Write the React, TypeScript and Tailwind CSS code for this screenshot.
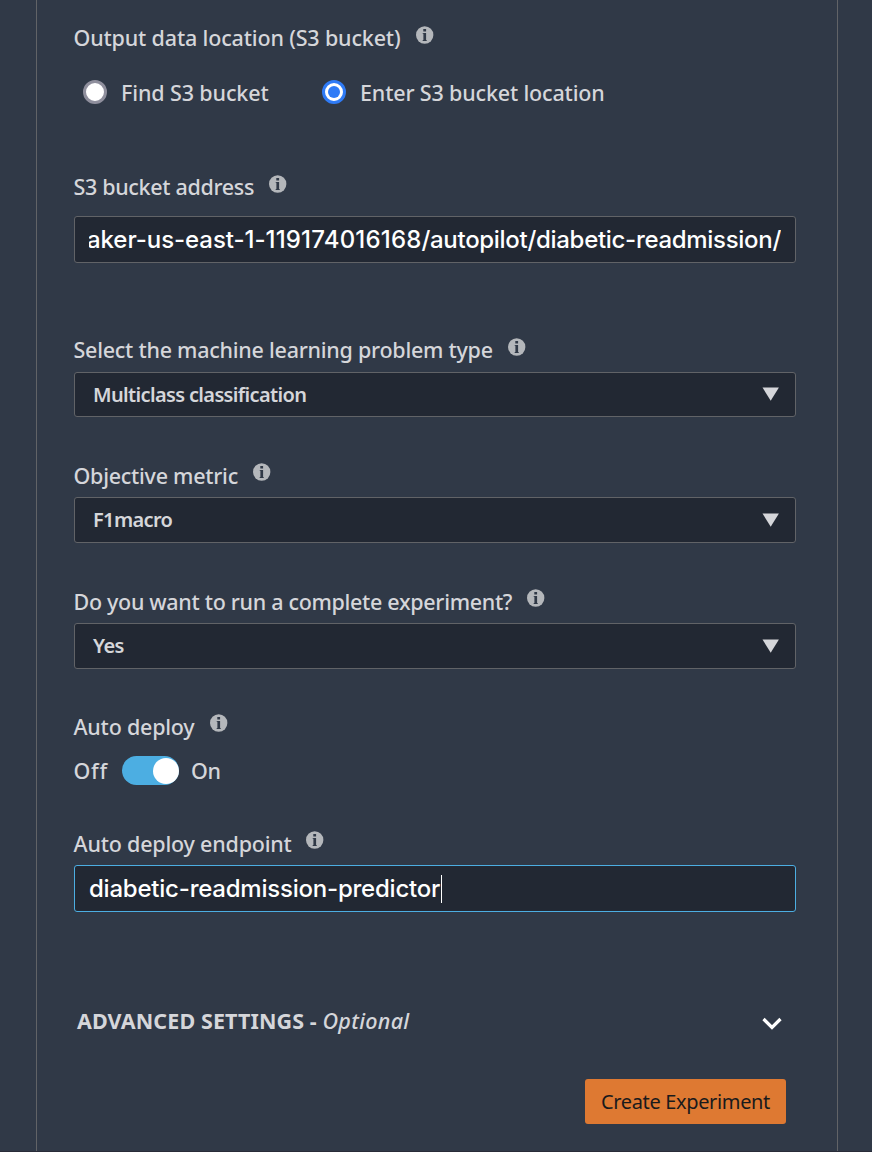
import type { ReactNode } from "react";

function InfoIcon({ raised = false }: { raised?: boolean }) {
  return (
    <svg className={`h-[18px] w-[18px] shrink-0 ${raised ? "mb-[9px]" : "mb-[7px]"}`} viewBox="0 0 18 18">
      <circle cx="8.7" cy="9" r="8.7" fill="#b4b7bb" />
      <path d="M7.3 3.100h2.800v2.300H7.300zM6.700 6.900h3.400v7.100h.600v.9H6.700v-.9h.7V7.800h-.7z" fill="#303947" />
    </svg>
  );
}

function Label({ children, className, raised }: { children: ReactNode; className: string; raised?: boolean }) {
  return (
    <div className="-ml-[0.5px] flex h-[30px] items-center text-[21.5px] leading-[30px] font-medium">
      <span className={`shrink-0 whitespace-nowrap ${className}`}>{children}</span>
      <InfoIcon raised={raised} />
    </div>
  );
}

function SelectBox({ children, className }: { children: ReactNode; className: string }) {
  return (
    <div className={`flex w-[722px] items-center justify-between rounded-[3px] border border-[#616367] bg-[#222833] pr-4 pl-[18px] text-xl font-semibold ${className}`}>
      <span className="whitespace-nowrap">{children}</span>
      <svg className="mb-px h-[14px] w-[17px]" viewBox="0 0 17 14">
        <path d="M.5.5h16.400L8.700 13.800z" fill="#d5d6da" />
      </svg>
    </div>
  );
}

export default function App() {
  return (
    <div className="h-[1152px] w-[872px] overflow-hidden border-b border-[#292c38] bg-[#303947] pl-9 font-['Noto_Sans',sans-serif] text-[#d5d6da]">
      <main className="flex h-[1152px] w-[802px] flex-col border-x border-[#616367] pt-[23px] pl-[37px]">
        <Label className="w-[342px] tracking-[-0.16px]">Output data location (S3 bucket)</Label>
        <div className="mt-[25px] flex h-[30px] items-center pl-[9px] text-[21.5px] leading-[30px] font-medium">
          <span className="mb-[2px] h-6 w-6 rounded-full border-[3px] border-[#8f8f9d] bg-white" />
          <span className="ml-[14px] w-[201px] whitespace-nowrap tracking-[-0.12px]">Find S3 bucket</span>
          <span className="mb-[2px] flex h-6 w-6 items-center justify-center rounded-full border-[3px] border-[#2f7bf6] bg-white">
            <span className="h-3 w-3 rounded-full bg-[#2f7bf6]" />
          </span>
          <span className="ml-[14px] whitespace-nowrap tracking-[-0.16px]">Enter S3 bucket location</span>
        </div>

        <div className="mt-16">
          <Label className="w-[195px] tracking-[-0.33px]">S3 bucket address</Label>
          <div className="mt-[14px] flex h-[47px] w-[722px] items-center rounded-[3px] border border-[#616367] bg-[#222833] px-[14px] font-['Inter',sans-serif] text-2xl font-medium text-white">
            <div className="flex w-[692px] justify-end overflow-hidden tracking-[-0.3px] whitespace-nowrap">
              <span className="shrink-0">
                <span className="tracking-[-0.05px]">aker-us-east-1-</span>
                <span className="tracking-[0.18px]">119174016168</span>
                /autopilot/diabetic-readmission/
              </span>
            </div>
          </div>
        </div>

        <div className="mt-[72px]">
          <Label className="w-[434px] tracking-[-0.25px]">Select the machine learning problem type</Label>
          <div className="mt-[7px]">
            <SelectBox className="h-[45px] tracking-[-0.65px]">Multiclass classification</SelectBox>
          </div>
        </div>

        <div className="mt-11">
          <Label raised className="w-[179px] tracking-[-0.26px]">Objective metric</Label>
          <div className="mt-[6px]">
            <SelectBox className="h-[46px] tracking-[-0.65px]">F1macro</SelectBox>
          </div>
        </div>

        <div className="mt-11">
          <Label raised className="w-[453px] tracking-[-0.31px]">Do you want to run a complete experiment?</Label>
          <div className="mt-[6px]">
            <SelectBox className="h-[46px] tracking-[-0.6px]">Yes</SelectBox>
          </div>
        </div>

        <div className="mt-[43px]">
          <Label raised className="w-[136px] tracking-[-0.22px]">Auto deploy</Label>
          <div className="mt-[14px] flex h-[29px] items-center text-[21.5px] leading-[30px] font-medium">
            <span className="-ml-[0.5px] w-[48.5px] pt-px tracking-[0.7px]">Off</span>
            <span className="flex h-[29px] w-[57px] items-center justify-end rounded-full bg-[#4caee2]">
              <span className="h-[26px] w-[26px] rounded-full bg-white" />
            </span>
            <span className="ml-3 pt-px tracking-[-0.35px]">On</span>
          </div>
        </div>

        <div className="mt-11">
          <Label raised className="w-[232px] tracking-[-0.2px]">Auto deploy endpoint</Label>
          <div className="mt-[6px] flex h-[47px] w-[722px] items-center rounded-[3px] border border-[#4caee2] bg-[#222833] px-[14px] font-['Inter',sans-serif] text-2xl font-medium text-white">
            <span className="w-[352px] tracking-[-0.22px] whitespace-nowrap">diabetic-readmission-predictor</span>
            <span className="h-7 w-px bg-white" />
          </div>
        </div>

        <div className="mt-[94px] flex h-[30px] w-[709px] items-center justify-between pl-[3px] text-[21.5px] leading-[30px]">
          <span className="whitespace-nowrap">
            <strong className="font-bold tracking-[0.1px]">ADVANCED SETTINGS - </strong>
            <em className="font-medium tracking-[0.3px]">Optional</em>
          </span>
          <svg className="mt-[6px] mr-px h-[14px] w-5" viewBox="0 0 20 14">
            <path d="M1.500 2l8.500 8.500L18.500 2" fill="none" stroke="#fff" strokeWidth="3.2" />
          </svg>
        </div>

        <button className="mt-[43px] ml-[511px] h-[45px] w-[201px] shrink-0 rounded-[3px] bg-[#de7932] text-xl tracking-[-0.35px] whitespace-nowrap text-[#191a1c]">
          Create Experiment
        </button>
      </main>
    </div>
  );
}
